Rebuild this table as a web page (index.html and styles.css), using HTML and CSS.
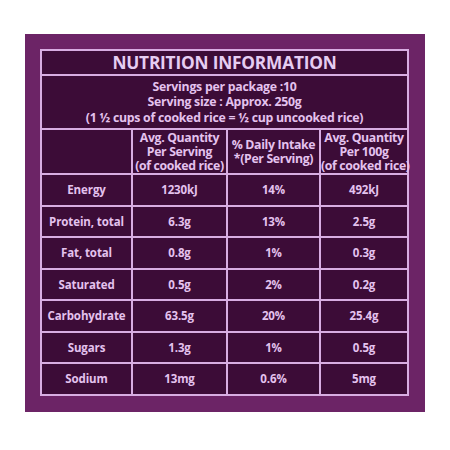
FILE: index.html
```html
<!DOCTYPE html>
<html>
<head>
<meta charset="utf-8">
<link rel="stylesheet" href="styles.css">
</head>
<body>
<div class="panel">
  <table class="nutri">
    <colgroup>
      <col class="c1"><col class="c2"><col class="c3"><col class="c4">
    </colgroup>
    <tr class="title-row"><td colspan="4">NUTRITION INFORMATION</td></tr>
    <tr class="serv-row"><td colspan="4">
      <div>Servings per package :10</div>
      <div>Serving size : Approx. 250g</div>
      <div>(1 ½ cups of cooked rice = ½ cup uncooked rice)</div>
    </td></tr>
    <tr class="head-row">
      <td></td>
      <td>Avg. Quantity<br>Per Serving<br>(of cooked rice)</td>
      <td>% Daily Intake<br>*(Per Serving)</td>
      <td>Avg. Quantity<br>Per 100g<br>(of cooked rice)</td>
    </tr>
    <tr class="row"><td>Energy</td><td>1230kJ</td><td>14%</td><td>492kJ</td></tr>
    <tr class="row"><td>Protein, total</td><td>6.3g</td><td>13%</td><td>2.5g</td></tr>
    <tr class="row"><td>Fat, total</td><td>0.8g</td><td>1%</td><td>0.3g</td></tr>
    <tr class="row"><td>Saturated</td><td>0.5g</td><td>2%</td><td>0.2g</td></tr>
    <tr class="row"><td>Carbohydrate</td><td>63.5g</td><td>20%</td><td>25.4g</td></tr>
    <tr class="row"><td>Sugars</td><td>1.3g</td><td>1%</td><td>0.5g</td></tr>
    <tr class="row"><td>Sodium</td><td>13mg</td><td>0.6%</td><td>5mg</td></tr>
  </table>
</div>
</body>
</html>
```
FILE: styles.css
```css
html, body {
  margin: 0;
  padding: 0;
  background: #ffffff;
}
body {
  padding: 34px 0 0 25px;
  font-family: "Open Sans", "Noto Sans", sans-serif;
  font-weight: 700;
  color: #e4c2ee;
}
.panel {
  width: 400px;
  height: 378px;
  box-sizing: border-box;
  padding: 15px 18px 0 15px;
  background: #6c2466;
}
.nutri {
  width: 367px;
  table-layout: fixed;
  border-collapse: collapse;
  background: #3c0c37;
  border: 2px solid #d8ade2;
}
.nutri td {
  border: 2px solid #d8ade2;
  text-align: center;
  padding: 0;
  vertical-align: middle;
}
.c1 { width: 91px; }
.c2 { width: 95px; }
.c3 { width: 93px; }
.c4 { width: 88px; }
.title-row td {
  height: 23px;
  font-size: 17.3px;
  letter-spacing: -0.2px;
  color: #e6cdf2;
}
.serv-row td {
  height: 52px;
  font-size: 12.3px;
  line-height: 15.5px;
  letter-spacing: -0.25px;
}
.head-row td {
  height: 43px;
  font-size: 12.3px;
  line-height: 14px;
  letter-spacing: -0.35px;
  white-space: nowrap;
}
.row td {
  height: 29.5px;
  font-size: 11.5px;
  letter-spacing: -0.1px;
}
```
